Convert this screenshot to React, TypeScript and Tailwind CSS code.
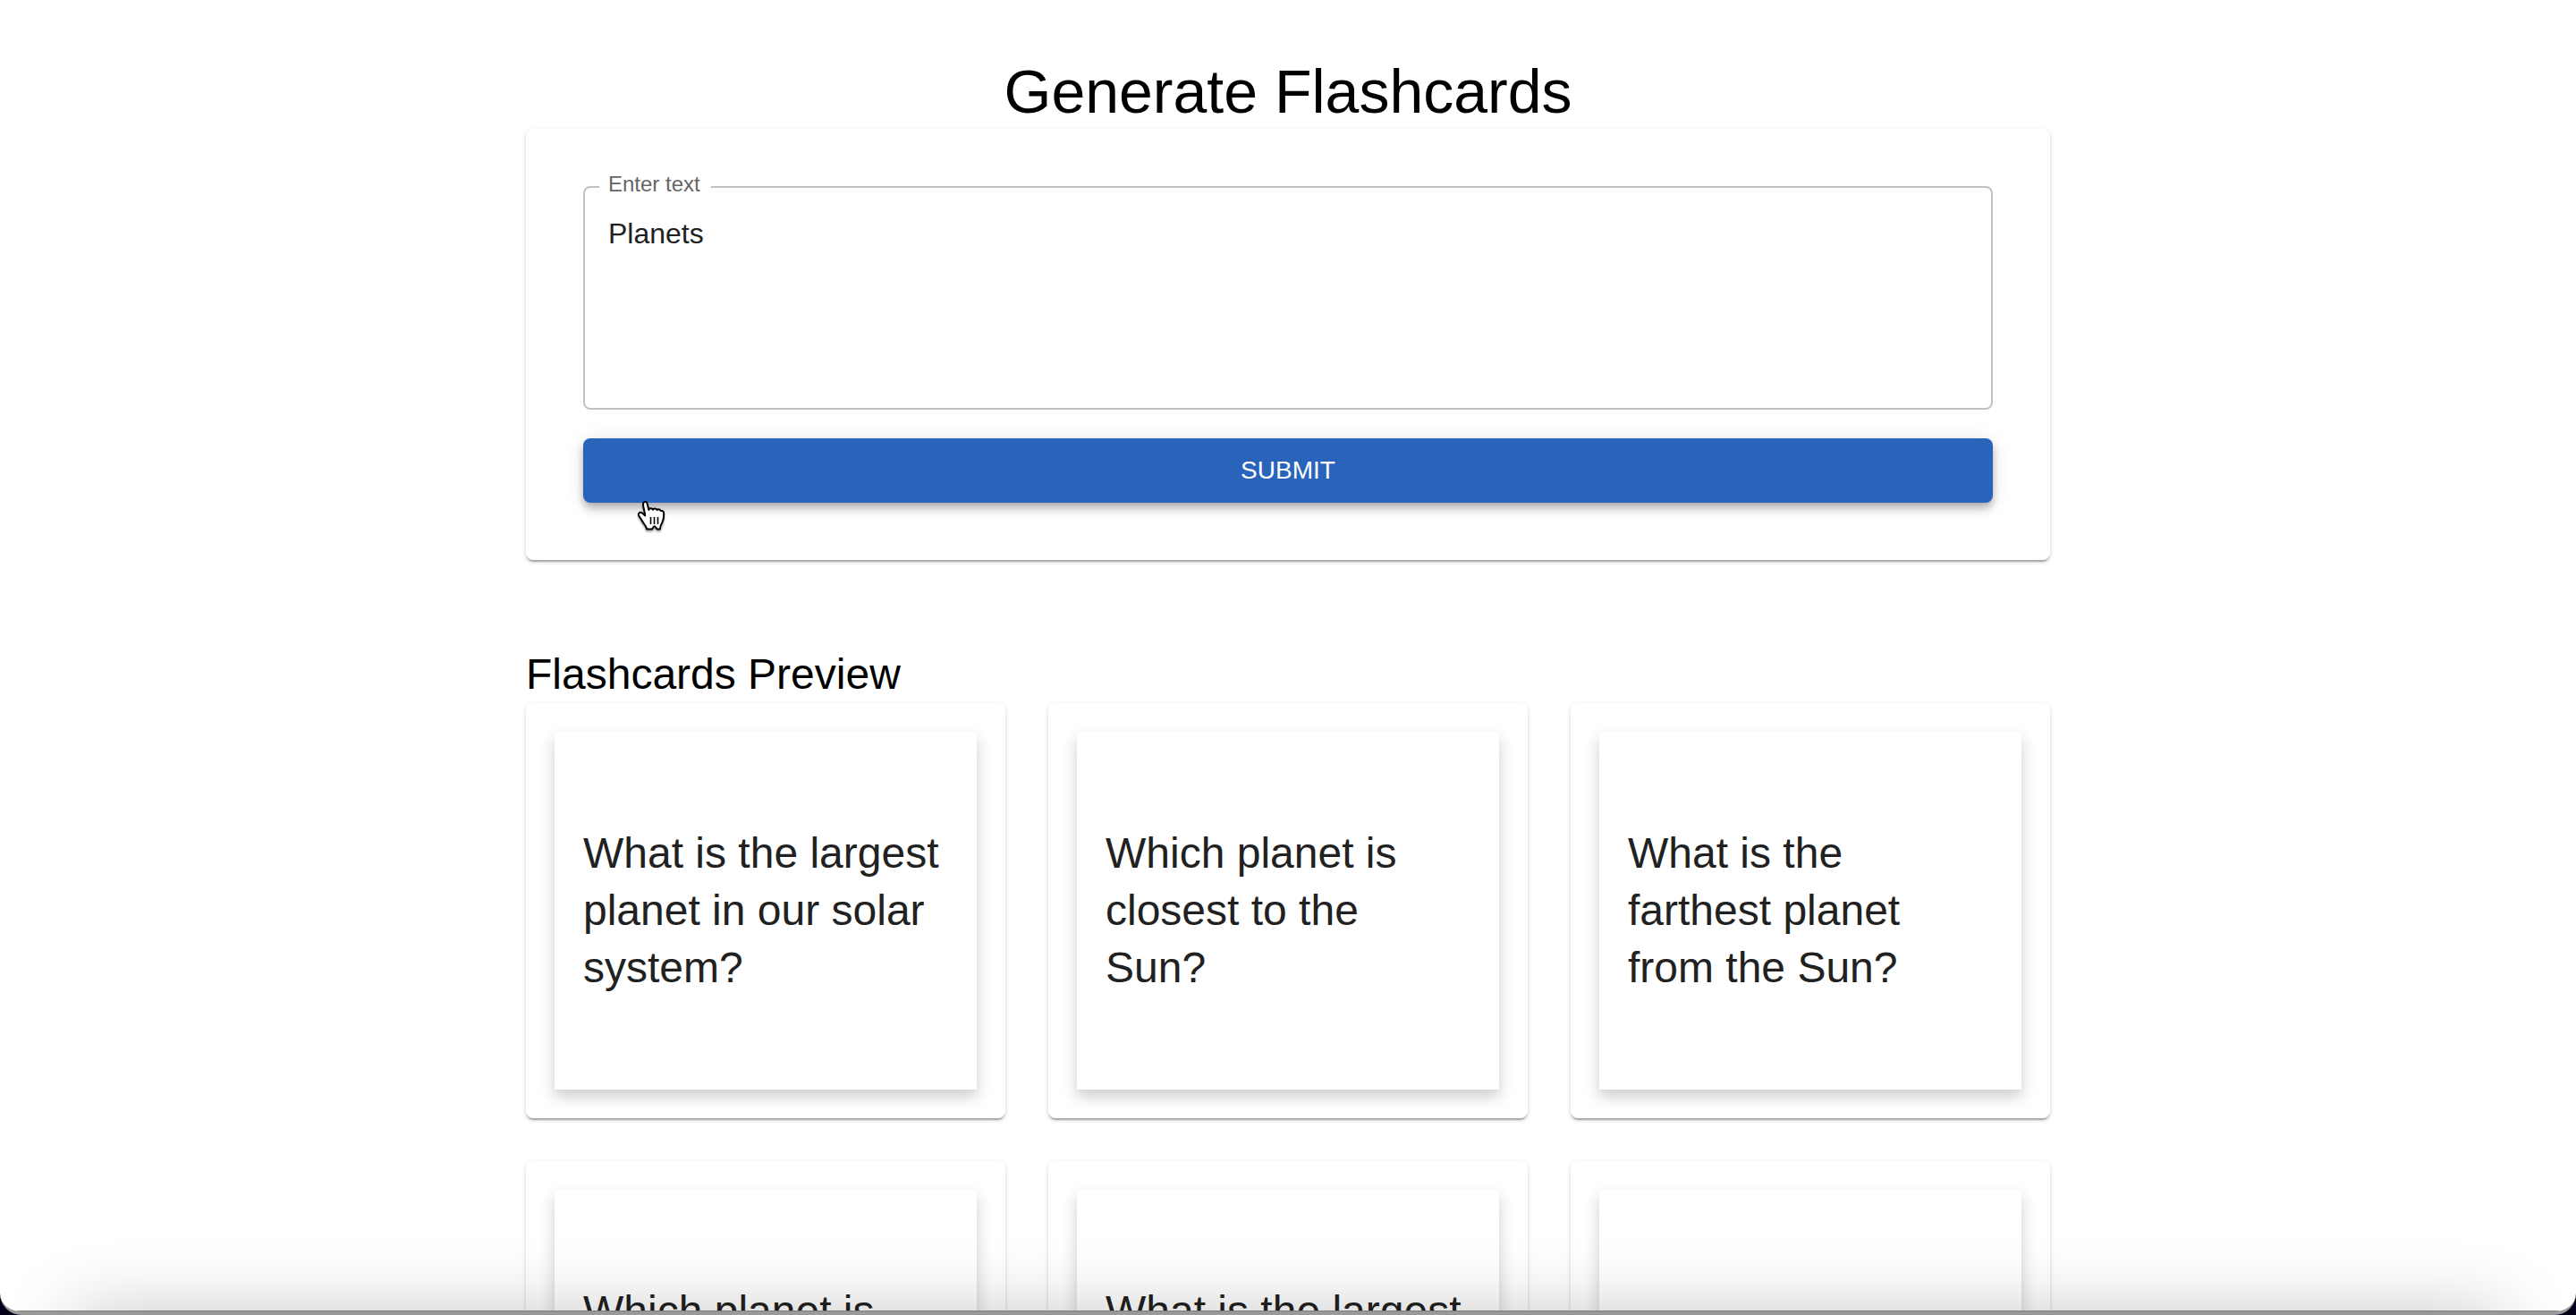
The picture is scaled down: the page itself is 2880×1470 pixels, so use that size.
const questions = [
  "What is the largest planet in our solar system?",
  "Which planet is closest to the Sun?",
  "What is the farthest planet from the Sun?",
  "Which planet is known as the Red Planet?",
  "What is the largest moon in the solar system?",
  "Which planet has the most rings?",
];

const paperShadow =
  "shadow-[0_4px_2px_-2px_rgba(0,0,0,0.2),0_2px_2px_0_rgba(0,0,0,0.14),0_2px_6px_0_rgba(0,0,0,0.12)]";

function PointerHand() {
  return (
    <svg
      aria-hidden="true"
      viewBox="0 0 32 36"
      className="pointer-events-none absolute top-[69px] left-[60px] h-9 w-8 drop-shadow-[0_2px_1px_rgba(0,0,0,0.35)]"
    >
      <path
        d="M11 32.500 C11 29.500 7.500 26.500 6 23.500 C4.500 20.500 2.800 19 2 17 C1.200 14.600 3.400 13.200 5.400 14.200 C7 15 8 16.500 9.200 17.500 C9 13.500 7.200 9 7 5 C7 1.200 10.600 .8 11.600 4 L13.400 11 C13.600 9 17 8.600 18 10.800 C19 8.800 21.600 9 22.600 11.200 C23.600 9.800 26 10.200 26.800 12 C29.400 11.400 30.400 13.400 30.200 16 C30.200 19 29.800 22 28.400 25 C27.400 27 26 28.500 26 32.500 L22.500 32.500 C21.500 31 20.800 29.300 19.800 29.300 C18.800 29.300 18 31.500 17 32.500 Z"
        fill="#fff"
        stroke="#000"
        strokeWidth="2"
        strokeLinejoin="round"
      />
      <path d="M15.500 19V27M19.500 19V27M23.500 19V27" stroke="#000" strokeWidth="1.600" />
    </svg>
  );
}

function Flashcard({ question }: { question: string }) {
  return (
    <article className={`rounded-lg bg-white p-8 ${paperShadow}`}>
      <div className="flex h-[400px] items-center p-8 shadow-[0_8px_16px_0_rgba(0,0,0,0.2)]">
        <h3 className="text-5xl leading-[64px] text-[#212121]">{question}</h3>
      </div>
    </article>
  );
}

export default function App() {
  return (
    <div className="h-screen bg-[#06001a] font-['Liberation_Sans',Arial,sans-serif]">
      <div className="relative h-full overflow-hidden rounded-b-3xl border-b-4 border-[#999] bg-white">
        <main className="mx-auto w-full max-w-[1800px] px-12 pt-[60px]">
          <h1 className="text-center text-[68px] leading-[84px] text-black">Generate Flashcards</h1>
          <form
            className={`flex flex-col gap-8 rounded-lg bg-white p-16 ${paperShadow}`}
            onSubmit={(e) => e.preventDefault()}
          >
            <div className="relative">
              <label
                htmlFor="source"
                className="absolute -top-4 left-[18px] bg-white pr-3 pl-2.5 text-2xl leading-7 text-[#666]"
              >
                Enter text
              </label>
              <textarea
                id="source"
                rows={4}
                defaultValue="Planets"
                className="block w-full resize-none rounded-lg border-2 border-[#c1c1c1] px-[26px] pt-7 pb-[34px] text-[32px] leading-[46px] text-[#212121] outline-none"
              />
            </div>
            <div className="relative">
              <button
                type="submit"
                className="block w-full rounded-lg bg-[#2a64ba] py-3 text-[28px] leading-[48px] text-white uppercase shadow-[0_4px_8px_-2px_rgba(0,0,0,0.2),0_8px_10px_0_rgba(0,0,0,0.14),0_2px_20px_0_rgba(0,0,0,0.12)]"
              >
                Submit
              </button>
              <PointerHand />
            </div>
          </form>
          <section className="mt-24">
            <h2 className="text-5xl leading-[64px] text-black">Flashcards Preview</h2>
            <div className="grid grid-cols-3 gap-12">
              {questions.map((q) => (
                <Flashcard key={q} question={q} />
              ))}
            </div>
          </section>
        </main>
        <div className="pointer-events-none absolute inset-x-20 top-full h-40 shadow-[0_0_80px_0_rgba(0,0,0,0.22)]" />
        <div className="pointer-events-none absolute inset-x-0 bottom-0 h-px bg-[#7c7c7c]" />
      </div>
    </div>
  );
}
